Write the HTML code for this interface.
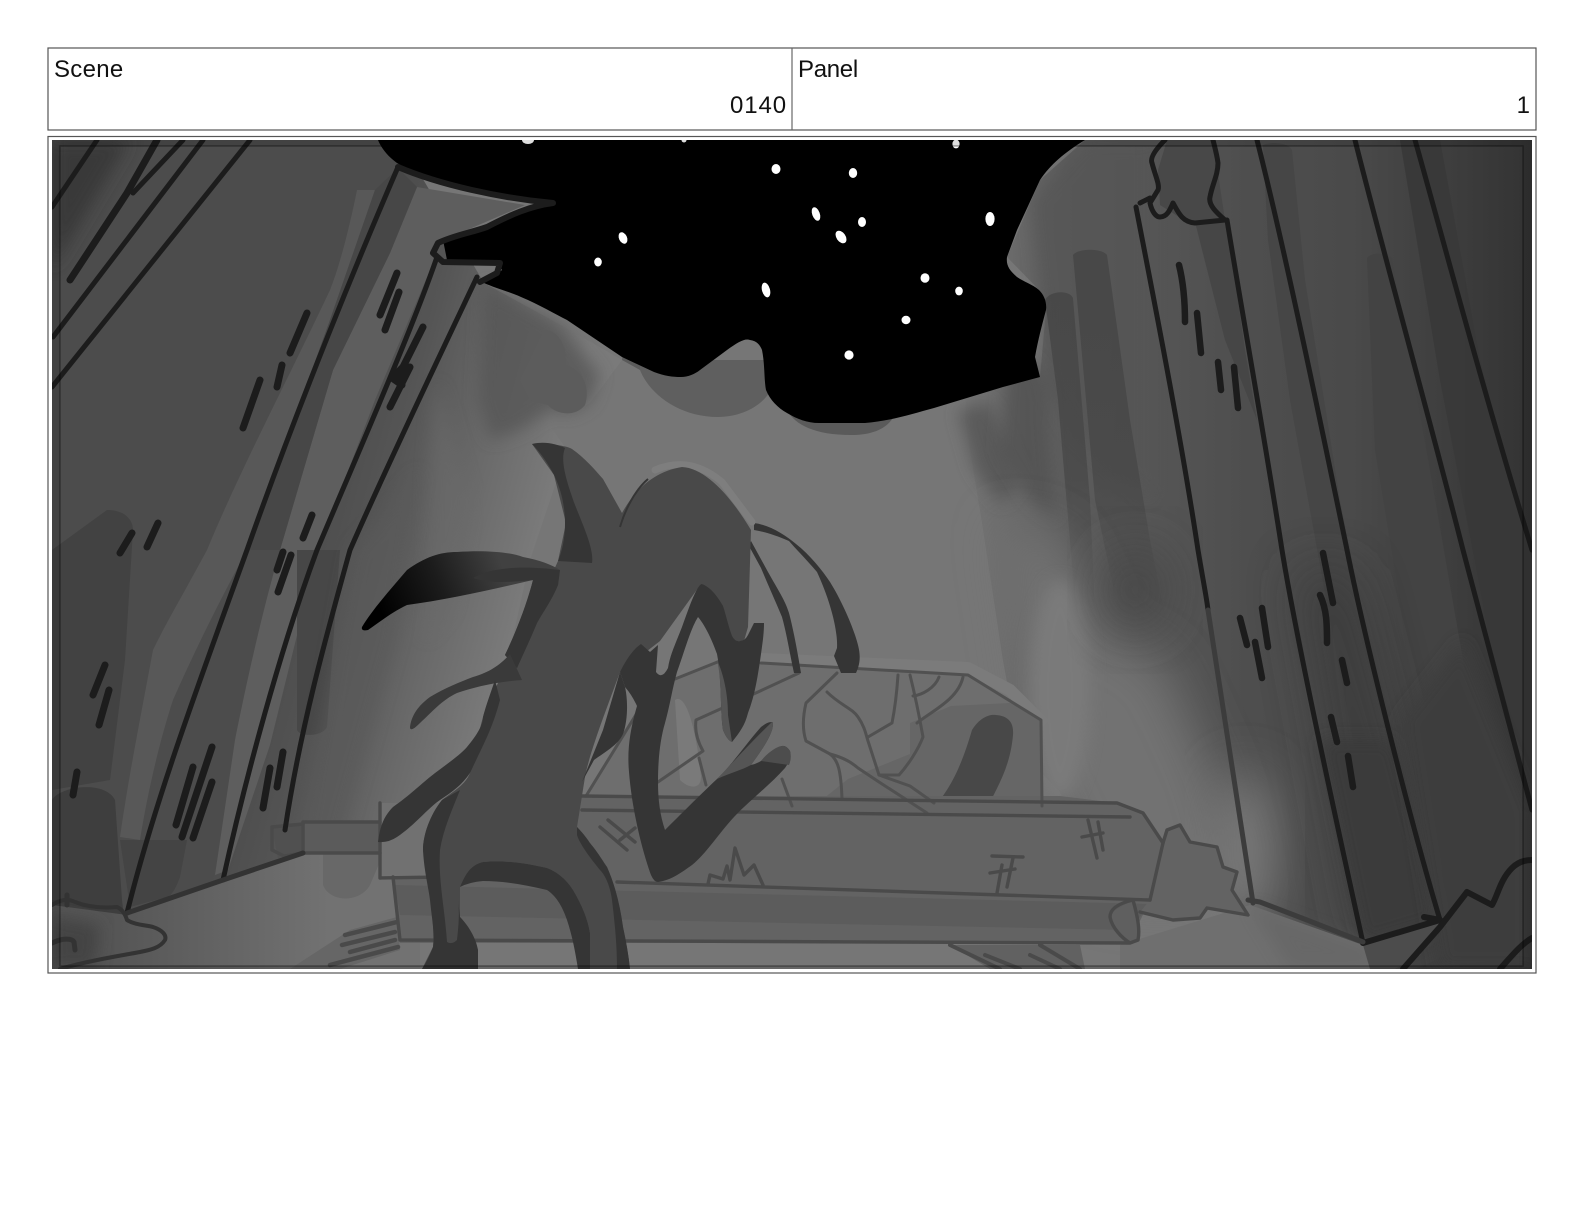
<!DOCTYPE html>
<html><head><meta charset="utf-8"><title>Scene 0140 Panel 1</title>
<style>
html,body{margin:0;padding:0;background:#fff;width:1584px;height:1224px;overflow:hidden}
.t{position:absolute;font-family:"Liberation Sans",sans-serif;font-size:24px;line-height:28px;color:#111;white-space:nowrap}
.n{letter-spacing:.9px}
svg{position:absolute;left:0;top:0}
</style></head><body>
<svg width="1584" height="1224" viewBox="0 0 1584 1224" xmlns="http://www.w3.org/2000/svg">
<defs>
<clipPath id="c"><rect x="52" y="140" width="1480" height="829"/></clipPath>
<linearGradient id="gl" gradientUnits="userSpaceOnUse" x1="320" y1="470" x2="540" y2="530">
<stop offset="0" stop-color="#4c4c4c"/><stop offset=".3" stop-color="#555"/><stop offset=".65" stop-color="#696969"/><stop offset="1" stop-color="#7a7a7a"/></linearGradient>
<linearGradient id="gr" gradientUnits="userSpaceOnUse" x1="965" y1="0" x2="1532" y2="0">
<stop offset="0" stop-color="#747474"/><stop offset=".08" stop-color="#6a6a6a"/><stop offset=".18" stop-color="#5c5c5c"/><stop offset=".32" stop-color="#565656"/><stop offset=".5" stop-color="#4e4e4e"/><stop offset=".68" stop-color="#4a4a4a"/><stop offset=".85" stop-color="#3e3e3e"/><stop offset="1" stop-color="#333"/></linearGradient>
<linearGradient id="gf" gradientUnits="userSpaceOnUse" x1="110" y1="0" x2="330" y2="0">
<stop offset="0" stop-color="#555"/><stop offset="1" stop-color="#727272"/></linearGradient>
<linearGradient id="gc" gradientUnits="userSpaceOnUse" x1="380" y1="610" x2="500" y2="560">
<stop offset="0" stop-color="#000"/><stop offset=".5" stop-color="#1c1c1c"/><stop offset="1" stop-color="#414141"/></linearGradient>
<linearGradient id="gd" gradientUnits="userSpaceOnUse" x1="0" y1="250" x2="0" y2="620">
<stop offset="0" stop-color="#454545" stop-opacity=".85"/><stop offset=".6" stop-color="#454545" stop-opacity=".7"/><stop offset="1" stop-color="#454545" stop-opacity="0"/></linearGradient>
<filter id="b8" x="-30%" y="-30%" width="160%" height="160%"><feGaussianBlur stdDeviation="8"/></filter>
<filter id="b25" x="-50%" y="-50%" width="200%" height="200%"><feGaussianBlur stdDeviation="25"/></filter>
</defs>

<!-- header table -->
<rect x="48" y="48" width="1488" height="82" fill="#fff" stroke="#555" stroke-width="1.2"/>
<line x1="792" y1="48" x2="792" y2="130" stroke="#666" stroke-width="1.2"/>
<rect x="48" y="136.5" width="1488" height="836.5" fill="#fff" stroke="#555" stroke-width="1.2"/>

<g clip-path="url(#c)">
<rect x="52" y="140" width="1480" height="829" fill="#767676"/>

<!-- left wall -->
<path d="M52,140H400L484,283L570,330L622,360L590,403L571,413L550,410L548,423L567,450L530,560L510,650L470,760L400,830L380,850L300,855L127,915L52,905Z" fill="url(#gl)"/>
<path d="M484,283L560,325L600,375L590,403L571,413L550,410L520,430L490,440L478,400Z" fill="#555" opacity=".75" filter="url(#b8)"/>
<path d="M544,330C560,330 568,350 565,365C585,370 590,390 585,405C575,418 555,414 548,405L530,400L520,380Z" fill="#5c5c5c"/>
<path d="M52,140H130L52,270Z" fill="#363636" filter="url(#b8)" opacity=".8"/>
<!-- stripes left -->
<path d="M357,190C350,225 340,265 330,290C290,375 240,470 207,550C180,600 165,625 153,650C140,720 128,780 120,837L140,840C148,790 160,740 173,700C195,650 220,600 247,550L330,320L375,190Z" fill="#585858"/>
<path d="M417,187L390,253L333,370L280,550C260,620 245,690 235,740L215,875L228,870L270,745L318,550L375,400L433,263L437,243L525,205Z" fill="#5e5e5e"/>
<path d="M375,190L398,168L417,187L390,253L333,370L280,550L247,550L330,320Z" fill="#474747"/>
<path d="M52,550L107,510C125,510 133,520 133,530L125,660L110,780L52,790Z" fill="#424242"/>
<path d="M52,800C60,786 105,780 115,800L122,900L125,925L52,925Z" fill="#3e3e3e"/>
<path d="M120,840H187L180,877C175,890 172,895 167,897L130,907Z" fill="#444"/>
<path d="M297,550L297,730C300,737 322,737 327,727L340,550Z" fill="#474747"/>
<path d="M352,550L420,470L395,640L340,840L300,840L325,700Z" fill="#5a5a5a" opacity=".7" filter="url(#b8)"/>
<path d="M430,470L437,380L470,500L450,610L425,640Z" fill="#6a6a6a" opacity=".6" filter="url(#b8)"/>

<!-- floor left -->
<path d="M52,905L127,915L303,853L420,848L420,969H52Z" fill="url(#gf)"/>
<path d="M52,915L100,925L95,969H52Z" fill="#404040" opacity=".8" filter="url(#b8)"/>
<path d="M323,850L323,885C330,903 360,903 370,885L385,850Z" fill="#686868"/>

<!-- right wall -->
<path d="M1085,140H1532V969H1440L1363,969L1250,910L1100,890L1060,792L1020,751L1003,661L982,523L965,420L966,395L1040,377L1046,310L1039,290L1007,257L1040,180Z" fill="url(#gr)"/>
<path d="M1030,200L1085,140H1150V500L1070,430L1045,385L1040,290Z" fill="#555" opacity=".7" filter="url(#b8)"/>
<path d="M958,410L990,402L1022,480L1002,505L975,470Z" fill="#555" opacity=".8" filter="url(#b8)"/>
<path d="M1007,357C1040,350 1050,380 1048,420L1056,520L1030,500L1000,450Z" fill="#4e4e4e" opacity=".65" filter="url(#b8)"/>
<path d="M1073,255C1078,248 1102,248 1107,255L1130,420L1150,540L1170,640L1120,620L1095,500Z" fill="url(#gd)"/>
<path d="M1045,300C1050,290 1070,290 1073,298L1090,500L1095,610L1075,600L1058,400Z" fill="url(#gd)"/>
<!-- soft light & dark in the right middle -->
<path d="M1000,520L1060,540L1110,640L1160,660L1215,780L1245,905L1100,900L1040,780Z" fill="#727272" filter="url(#b25)"/>
<ellipse cx="1060" cy="690" rx="30" ry="110" fill="#7a7a7a" filter="url(#b8)"/>
<ellipse cx="1135" cy="590" rx="34" ry="42" fill="#444" filter="url(#b25)" opacity=".8"/>
<ellipse cx="1245" cy="850" rx="30" ry="80" fill="#7c7c7c" filter="url(#b25)"/>
<path d="M1167,140H1213L1225,220L1187,222L1160,205L1158,170Z" fill="#484848"/>
<path d="M1195,222H1227L1245,350L1257,420L1225,340Z" fill="#464646"/>
<path d="M1263,145C1270,142 1288,142 1292,150L1305,280L1340,500L1360,600L1400,780L1370,830L1330,620L1290,400L1268,240Z" fill="#464646"/>
<path d="M1367,258C1372,252 1385,252 1392,258L1430,470L1470,700L1470,880L1420,760L1400,600L1375,450Z" fill="#434343"/>
<path d="M1400,140H1440L1480,360L1532,560V800L1490,640L1440,380Z" fill="#383838" opacity=".9"/>
<path d="M1295,570L1350,570L1440,920L1363,943Z" fill="#3a3a3a" opacity=".8" filter="url(#b25)"/>
<path d="M1320,740L1392,740L1440,920L1363,943Z" fill="#3a3a3a" filter="url(#b8)"/>
<path d="M1400,720L1463,640L1532,810V969H1440Z" fill="#3e3e3e" filter="url(#b8)"/>

<!-- floor right -->
<path d="M1120,945L1250,905L1363,945L1380,969H1120Z" fill="#6f6f6f"/>
<path d="M1250,905L1363,945L1395,969H1290Z" fill="#5f5f5f" opacity=".45" filter="url(#b8)"/>
<path d="M1363,945L1440,922L1420,955L1395,969H1370Z" fill="#4c4c4c"/>

<!-- tomb halo + upper -->
<path d="M740,658L968,668L1010,690L1045,725" fill="none" stroke="#7b7b7b" stroke-width="12" stroke-linejoin="round"/>
<path d="M586,796L637,713L675,679L720,661L968,675L1041,720L1042,806Z" fill="#6e6e6e"/>
<path d="M675,700C690,690 700,760 700,770C705,790 690,790 680,780Z" fill="#7a7a7a"/>
<path d="M823,799L848,779L910,754L910,723L951,706L1010,703L1041,720L1042,800Z" fill="#666"/>
<path d="M929,813C945,795 958,778 972,730C980,717 990,714 996,715C1008,716 1014,722 1013,735C1010,770 995,790 985,813Z" fill="#484848"/>
<!-- beam -->
<path d="M582,796H1060L1117,803L1143,813L1163,843L1150,900L1138,925L1130,943H400L393,877H440L470,796Z" fill="#636363"/>
<path d="M395,885L1150,904L1130,930L400,915Z" fill="#5c5c5c"/>
<path d="M303,822H380V853H303Z" fill="#5b5b5b"/>
<path d="M272,827L303,824V852L278,858Z" fill="#505050"/>
<path d="M380,803L440,803L440,875H380Z" fill="#717171"/>
<path d="M1163,843L1167,830L1180,825L1190,842L1217,847L1223,867L1237,872L1232,890L1248,915L1207,908L1200,918L1173,920L1140,912L1150,900Z" fill="#636363"/>
<path d="M1133,900L1110,913L1113,930L1130,943L1138,940L1138,923Z" fill="#5f5f5f"/>
<path d="M950,945H1080L1085,969H990Z" fill="#616161"/>
<path d="M350,930L397,917L400,950L340,969L290,969Z" fill="#666"/>

<!-- tomb lines -->
<g fill="none" stroke="#515151" stroke-width="3" stroke-linecap="round" stroke-linejoin="round">
<path d="M675,679L720,661M761,663L968,675L1041,720L1042,806"/>
<path d="M586,796L637,713"/>
<path d="M799,673L758,692L696,720Q694,735 703,751L658,782M699,758L706,785"/>
<path d="M837,673L806,703C802,720 803,732 806,741L830,754C838,760 841,770 842,799"/>
<path d="M827,692C840,705 852,708 858,717C865,727 866,735 868,741L879,775H899C908,765 918,750 923,737C920,720 915,695 910,675"/>
<path d="M868,737L892,723C895,708 897,690 898,675"/>
<path d="M830,754C845,758 852,763 858,768L879,782L927,813M879,775L910,786L934,803"/>
<path d="M913,696C922,695 935,688 939,677M917,723C930,712 958,700 963,677"/>
<path d="M782,779L792,806"/>
</g>
<g fill="none" stroke="#4a4a4a" stroke-width="3.4" stroke-linecap="round" stroke-linejoin="round">
<path d="M582,796L1117,803L1143,813L1163,843L1150,900"/>
<path d="M582,810L1130,817"/>
<path d="M617,882L1150,900"/>
<path d="M393,877L400,940L1130,943L1138,940C1140,930 1138,918 1133,900C1120,903 1110,908 1110,917C1112,928 1122,938 1130,943"/>
<path d="M380,878L440,877M380,803V878"/>
<path d="M303,822H380M303,853H380M303,822V853"/>
<path d="M272,827L303,824M272,827V850L284,856L303,853"/>
<path d="M1163,843L1167,830L1180,825L1190,842L1217,847L1223,867L1237,872L1232,890L1248,915L1207,908L1200,918L1173,920L1140,912"/>
<path d="M1088,820L1097,858M1098,822L1103,850M1082,837L1103,833"/>
<path d="M992,856L1023,857M1013,858L1007,887M1002,865L997,893M990,873L1015,869"/>
<path d="M708,884L710,875L723,879L727,866L730,880L735,848L744,875L754,865L763,885"/>
<path d="M600,827L627,850M608,820L635,842M620,840L635,828"/>
<path d="M345,935L397,922M342,945L395,932M330,965L398,947M350,952L395,940" stroke-width="4.5"/>
<path d="M950,945L1000,969M1040,945L1080,969M985,955L1020,969M1030,955L1060,969" stroke-width="4"/>
</g>

<!-- halos under sky -->
<path d="M624,347L640,350L640,370L622,360Z" fill="#5a5a5a"/>
<path d="M640,370C650,395 680,417 718,417C740,417 760,407 769,393L766,360L640,360Z" fill="#5f5f5f"/>
<path d="M787,410C795,425 815,435 851,435C870,435 885,430 893,418Z" fill="#5a5a5a"/>

<!-- sky -->
<path d="M378,140C382,150 390,158 397,163C430,183 490,197 553,202L545,206C525,208 505,217 487,225C470,232 455,234 443,240L447,260L498,263L502,270L484,283C495,288 510,292 521,297C540,305 555,314 567,320L622,357L654,372C665,376 672,377 681,377C688,377 695,374 700,370L727,350C738,342 745,338 750,340C757,341 760,345 762,350C765,365 764,380 766,390C770,400 778,408 787,413C797,419 807,423 819,423H865C890,421 912,414 934,408L1003,387L1040,377L1035,357C1038,340 1042,325 1046,310C1047,302 1044,295 1039,290C1032,284 1024,282 1017,277C1009,270 1006,265 1007,257L1017,230L1040,180C1050,165 1065,152 1085,140Z" fill="#000"/>
<path d="M552,204L557,210L525,212C535,208 545,206 552,204Z" fill="#000"/>
<!-- stars -->
<g fill="#fff">
<ellipse cx="776" cy="169" rx="4.5" ry="5"/><ellipse cx="853" cy="173" rx="4.2" ry="5"/>
<ellipse cx="816" cy="214" rx="3.8" ry="7" transform="rotate(-20 816 214)"/><ellipse cx="862" cy="222" rx="4" ry="5"/>
<ellipse cx="841" cy="237" rx="4.5" ry="7" transform="rotate(-35 841 237)"/><ellipse cx="990" cy="219" rx="4.6" ry="7"/>
<ellipse cx="623" cy="238" rx="4" ry="6" transform="rotate(-25 623 238)"/><ellipse cx="598" cy="262" rx="3.8" ry="4.5"/>
<ellipse cx="766" cy="290" rx="4" ry="7.5" transform="rotate(-15 766 290)"/><ellipse cx="925" cy="278" rx="4.5" ry="4.8"/>
<ellipse cx="959" cy="291" rx="3.8" ry="4.4"/><ellipse cx="906" cy="320" rx="4.5" ry="4.2"/>
<ellipse cx="849" cy="355" rx="4.6" ry="4.6"/><ellipse cx="528" cy="140" rx="6" ry="4"/>
<ellipse cx="684" cy="140" rx="2.5" ry="2.5"/><ellipse cx="956" cy="144" rx="3.6" ry="4.4"/>
</g>

<!-- wall lines -->
<g fill="none" stroke="#1c1c1c" stroke-width="5" stroke-linecap="round" stroke-linejoin="round">
<path d="M97,140L52,207"/>
<path d="M157,140L127,193L70,280" stroke-width="7"/>
<path d="M183,140L133,193" stroke-width="5"/>
<path d="M203,140L53,337"/>
<path d="M250,140L52,387"/>
<path d="M398,167C360,255 300,400 247,550C200,680 155,800 127,913"/>
<path d="M437,257C410,335 355,460 317,550C280,650 245,780 223,880"/>
<path d="M477,277C440,355 385,470 350,550C325,640 300,730 285,830"/>
<path d="M398,167C440,185 500,198 553,203C530,206 510,215 487,227C470,233 455,235 438,243L433,253L443,262L500,263L497,273L480,282" stroke-width="6"/>
<path d="M307,313L290,353M282,365L277,387M260,380L243,428M397,273L380,315M399,292L385,330M423,327L398,377M410,367L390,407M312,515L303,538M158,523L147,547M132,533L120,553M283,552L277,570M291,555L278,592M105,665L93,695M109,690L99,725M77,772L73,795M212,747L182,837M193,767L176,825M212,782L193,838M283,752L277,787M270,768L263,808" stroke-width="7"/>
<path d="M405,365L392,378L402,385" stroke-width="7"/>
</g>
<g fill="none" stroke="#333" stroke-width="4" stroke-linecap="round" stroke-linejoin="round">
<path d="M127,913L223,880L303,853" stroke-width="5"/>
<path d="M52,905C60,900 67,898 75,902C90,908 105,908 117,907Q124,910 127,920C135,925 145,925 153,927C162,930 167,935 165,940C160,948 150,950 140,952C125,955 90,960 60,969"/>
<path d="M52,943C62,938 72,938 74,942L75,950" stroke-width="5"/>
<path d="M67,895V905" stroke-width="5"/>
</g>
<g fill="none" stroke="#1c1c1c" stroke-width="5" stroke-linecap="round" stroke-linejoin="round">
<path d="M1136,207C1150,280 1180,430 1198,550C1203,580 1207,600 1208,610"/>
<path d="M1227,220C1240,300 1265,440 1282,550C1295,630 1325,770 1363,943"/>
<path d="M1257,140C1285,250 1320,420 1347,550C1365,640 1410,820 1440,920"/>
<path d="M1355,140C1380,240 1430,420 1463,550C1490,650 1515,745 1532,810"/>
<path d="M1415,140C1435,210 1480,380 1532,550"/>
<path d="M1165,140C1155,150 1150,158 1152,163C1155,175 1160,185 1158,190L1150,203C1152,212 1156,217 1160,217C1167,217 1170,210 1173,203C1178,212 1182,222 1195,223L1225,220C1217,213 1208,205 1210,197C1212,185 1218,175 1218,163C1217,155 1215,148 1213,140"/>
<path d="M1140,203L1150,198"/>
<path d="M1179,265C1184,285 1185,305 1185,322M1197,313L1201,353M1218,362L1221,390M1234,367L1238,408M1240,618L1247,645M1262,608L1268,647M1255,642L1262,678M1323,553L1333,603M1320,595C1327,610 1327,625 1327,643M1342,660L1347,683M1331,717L1337,742M1348,756L1353,787" stroke-width="6.5"/>
<path d="M1363,943L1440,920L1424,917" stroke-width="6"/>
<path d="M1403,969L1440,927L1467,892L1492,905C1498,895 1500,880 1512,868C1518,862 1525,860 1532,860M1500,969C1510,958 1520,945 1532,938" stroke-width="6"/>
</g>
<g fill="none" stroke="#3c3c3c" stroke-width="5" stroke-linecap="round" stroke-linejoin="round">
<path d="M1208,610C1222,700 1240,820 1253,903"/>
<path d="M1248,900L1260,902L1307,920L1363,942"/>
</g>

<!-- antennae -->
<path d="M754,523C770,525 785,535 796,544C810,555 822,570 830,582C840,598 850,620 855,635C860,650 862,660 856,673H841L834,656L837,648C838,630 830,600 817,572C805,558 795,548 789,541C775,535 765,532 754,530Z" fill="#353535"/>
<path d="M751,541L768,572C778,590 785,600 789,613C794,632 798,655 801,673H794C790,655 787,635 782,617C775,600 768,585 761,568L749,546Z" fill="#353535"/>

<!-- head halo -->
<path d="M655,470Q690,455 722,482L752,522" fill="none" stroke="#7e7e7e" stroke-width="7" stroke-linecap="round"/>
<!-- character body -->
<path d="M622,513C632,495 650,472 682,467C705,468 730,495 751,530L748,627L744,641L734,641L701,584L660,641L620,672C610,700 590,750 585,777L577,827C590,845 600,855 607,867C615,885 620,905 623,927Q628,950 630,969H590V933C588,920 582,905 573,890C568,882 560,873 547,868C525,863 505,860 483,862C470,865 465,875 460,887V917L478,950V969H422L433,947C435,920 428,880 423,850C423,835 430,815 442,800C455,790 465,785 470,773C475,750 478,735 483,717C488,700 500,680 510,660C525,640 530,620 536,600C545,585 552,575 558,561L566,523L554,475L532,444C550,444 565,445 572,449C585,458 595,470 603,479Z" fill="#494949"/>
<path d="M620,527C625,510 635,490 648,479" fill="none" stroke="#353535" stroke-width="2"/>
<!-- horn dark inner -->
<path d="M532,444C545,441 556,444 565,448C560,460 566,480 575,505C585,530 594,550 592,563L558,561C567,540 569,505 554,475C548,463 540,452 532,444Z" fill="#353535"/>
<!-- crescent -->
<path d="M362,627C372,610 390,590 407,570C425,557 440,552 457,552C485,550 510,552 523,557C540,560 552,565 560,570L558,585C552,600 543,612 537,623C530,640 525,650 517,668L505,655C518,628 528,600 533,580C490,590 445,600 407,605C392,612 380,622 368,630C364,631 361,630 362,627Z" fill="url(#gc)"/>
<path d="M473,578C490,568 520,565 560,570L558,585C552,600 543,612 537,623C530,640 525,650 517,668L505,655C518,628 528,600 533,580C510,582 490,584 473,578Z" fill="#353535"/>
<!-- middle arm -->
<path d="M410,727C412,712 422,703 430,697C445,688 460,682 473,677C490,672 500,665 510,654L522,680C495,682 475,687 457,693C442,700 432,712 420,723Q410,733 410,727Z" fill="#3a3a3a"/>
<!-- low arm -->
<path d="M378,842C380,825 385,815 393,807C410,795 420,785 430,777C445,765 458,757 467,747C477,735 483,725 483,717C486,705 490,695 495,680L500,700C492,730 483,745 470,773C462,785 452,792 440,800C428,808 415,825 397,837Q388,843 378,842Z" fill="#353535"/>
<!-- leg edges -->
<path d="M442,800C430,815 423,835 423,850C424,870 428,885 430,900C432,920 435,935 433,947Q428,960 422,969H478V950C476,938 468,925 460,917L458,900C460,915 458,930 457,940Q452,945 447,942C445,910 438,880 440,850C443,830 452,810 460,790Z" fill="#353535"/>
<path d="M460,887C465,875 470,865 483,862C505,860 525,863 547,868C560,873 568,882 573,890C582,905 588,920 590,933V969H578C575,950 572,935 567,920C562,905 555,895 547,890C525,885 505,881 483,881Q470,882 460,887Z" fill="#353535"/>
<path d="M577,827C585,835 590,843 590,843C600,855 603,862 607,867C615,885 620,905 623,927Q628,950 630,969H617C617,945 615,925 612,900C610,885 605,875 600,870C592,860 580,845 577,835Z" fill="#353535"/>
<!-- side band -->
<path d="M620,672L603,730L582,782L594,760C605,752 618,745 623,734C628,720 628,700 625,687Z" fill="#353535"/>
<!-- big right arm -->
<path d="M625,687Q632,695 637,706C630,730 627,750 629,772C632,810 642,850 651,875Q654,882 658,882C672,880 682,872 692,865C705,855 720,832 734,817C750,800 770,785 785,768Q792,758 790,751Q786,745 782,746C775,748 768,755 761,761Q756,764 751,765C758,755 768,742 772,730Q774,722 772,722C768,722 765,724 761,727C745,745 732,765 717,779C700,795 680,815 665,830C660,815 658,800 658,782C658,760 660,740 665,723C670,705 672,690 677,672C685,650 690,630 698,617C705,625 712,640 717,654C722,680 720,710 723,730Q727,740 732,742C740,732 745,725 748,713C755,695 758,675 761,654C763,640 764,632 764,623L754,623L748,635Q745,641 740,641Q735,642 732,636C728,625 726,615 723,606C717,595 708,585 701,584C695,590 690,605 682,627C675,645 670,655 668,668Q662,680 656,672L658,645L650,652L641,644C632,650 625,662 620,672Z" fill="#353535"/>
<path d="M717,779C735,760 755,738 772,722Q774,722 772,730C768,742 758,755 751,765C742,770 730,773 717,779Z" fill="#555"/>
<path d="M761,761C768,752 778,746 782,746Q786,745 790,751Q792,758 789,765Z" fill="#4d4d4d"/>
<path d="M717,660C722,680 720,710 723,730Q727,740 732,742L728,715C728,695 724,675 717,660Z" fill="#555"/>

<!-- inner overlay -->
<path fill-rule="evenodd" d="M52,140H1532V969H52ZM60,146V966H1523V146Z" fill="#000" opacity=".13"/>
<rect x="60" y="146" width="1463" height="820" fill="none" stroke="#000" stroke-opacity=".35" stroke-width="1.5"/>
</g>
</svg>
<div class="t" style="left:54px;top:56px;letter-spacing:.3px">Scene</div>
<div class="t n" style="right:797px;top:92px">0140</div>
<div class="t" style="left:798px;top:56px;letter-spacing:-.3px">Panel</div>
<div class="t" style="right:54px;top:92px">1</div>
</body></html>
